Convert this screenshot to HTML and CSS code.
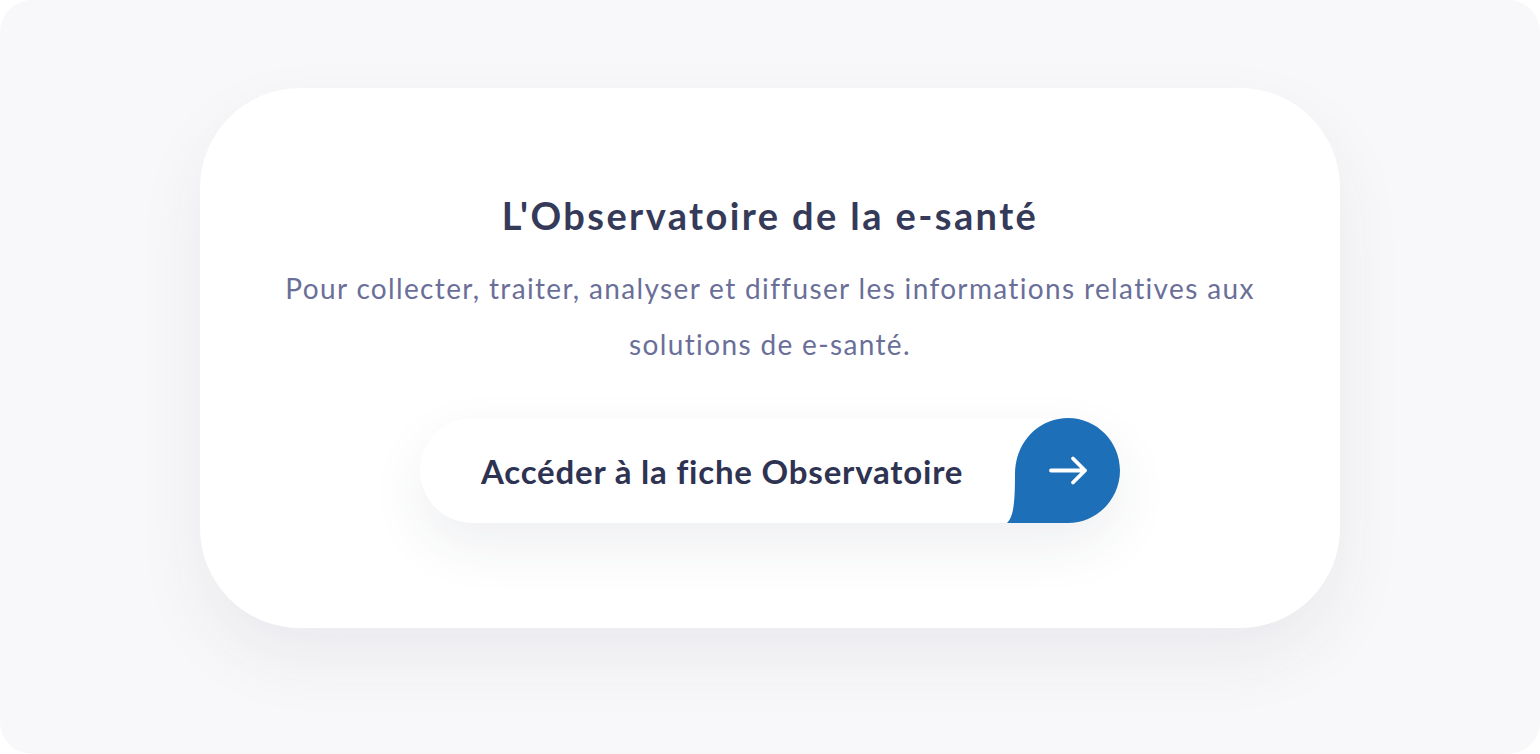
FILE: index.html
```html
<!DOCTYPE html>
<html lang="fr">
<head>
<meta charset="utf-8">
<link rel="stylesheet" href="styles.css">
</head>
<body>
<div class="frame">
  <section class="card">
    <h1 class="title">L'Observatoire de la e-santé</h1>
    <p class="lead">Pour collecter, traiter, analyser et diffuser les informations relatives aux solutions de e-santé.</p>
    <a class="cta" href="#">
      <span class="cta-label">Accéder à la fiche Observatoire</span>
      <span class="cta-blob">
        <svg class="blob-shape" viewBox="0 0 113 105" width="113" height="105" aria-hidden="true">
          <path d="M0 105 C6 99 8 88 8 56 C8 25 31 0 61 0 C90 0 113 24 113 52.5 C113 81 90 105 61 105 Z" fill="#1d70b7"/>
          <path d="M44 52.5 H78 M66 40.5 L78 52.5 L66 64.5" fill="none" stroke="#fff" stroke-width="3.8" stroke-linecap="round" stroke-linejoin="round"/>
        </svg>
      </span>
    </a>
  </section>
</div>
</body>
</html>
```
FILE: styles.css
```css
html, body {
  margin: 0;
  padding: 0;
  background: #ffffff;
}
body {
  width: 1540px;
  height: 754px;
  font-family: "Lato", "Noto Sans", sans-serif;
}
.frame {
  box-sizing: border-box;
  width: 1540px;
  height: 754px;
  border-radius: 32px;
  background: #f8f8fa;
  padding-top: 88px;
  display: flex;
  justify-content: center;
  align-items: flex-start;
}
.card {
  box-sizing: border-box;
  width: 1140px;
  height: 540px;
  background: #ffffff;
  border-radius: 100px;
  box-shadow: 0 30px 70px rgba(50, 55, 90, 0.07);
  display: flex;
  flex-direction: column;
  align-items: center;
  padding-top: 104px;
}
.title {
  margin: 0;
  font-size: 38px;
  line-height: 46px;
  font-weight: 700;
  color: #353a59;
  letter-spacing: 2.4px;
}
.lead {
  margin: 22px 0 0;
  width: 1000px;
  text-align: center;
  font-size: 28px;
  line-height: 56px;
  font-weight: 400;
  color: #6a6f99;
  letter-spacing: 1.35px;
}
.cta {
  margin-top: 46px;
  width: 700px;
  height: 105px;
  border-radius: 53px;
  background: #ffffff;
  box-shadow: 0 22px 55px rgba(40, 45, 80, 0.08);
  display: flex;
  align-items: center;
  justify-content: space-between;
  text-decoration: none;
}
.cta-label {
  padding-left: 61px;
  font-size: 33px;
  font-weight: 700;
  color: #2f3352;
  letter-spacing: 0.8px;
}
.cta-blob {
  display: flex;
  width: 113px;
  height: 105px;
}
.blob-shape {
  display: block;
}
```
